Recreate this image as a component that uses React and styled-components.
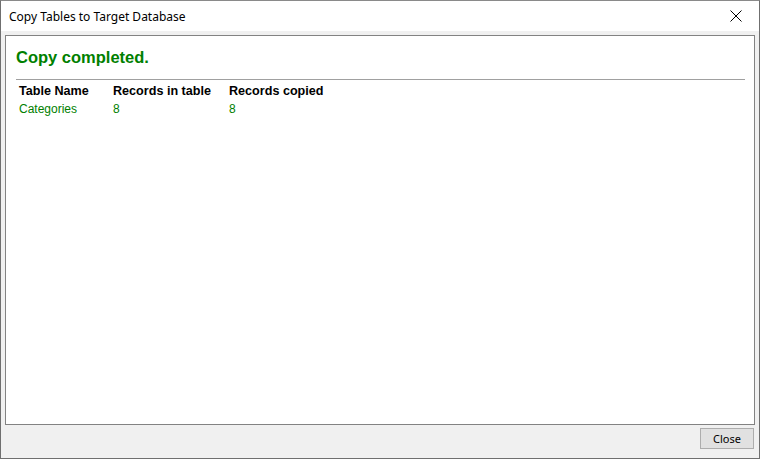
import React from 'react'
import styled, { createGlobalStyle } from 'styled-components'

const Global = createGlobalStyle`
  html, body {
    margin: 0;
    padding: 0;
    background: #ffffff;
  }
`

const Window = styled.div`
  width: 760px;
  height: 459px;
  box-sizing: border-box;
  border: 1px solid #6f6f6f;
  border-top-color: #8a8a8a;
  background: #f0f0f0;
  display: flex;
  flex-direction: column;
  font-family: "Noto Sans", "Open Sans", sans-serif;
`

const TitleBar = styled.div`
  height: 30px;
  background: #ffffff;
  display: flex;
  align-items: center;
  justify-content: space-between;
  padding-left: 8px;
  flex-shrink: 0;
`

const Title = styled.span`
  font-size: 12px;
  color: #000000;
`

const CloseX = styled.button`
  width: 46px;
  height: 30px;
  border: none;
  background: transparent;
  display: flex;
  align-items: center;
  justify-content: center;
  padding: 0;
`

const Body = styled.div`
  flex: 1;
  display: flex;
  flex-direction: column;
  padding: 4px 4px 0 4px;
`

const Panel = styled.div`
  flex: 1;
  background: #ffffff;
  border: 1px solid #828282;
  padding: 10px 9px 0 10px;
  font-family: "Liberation Sans", Arial, sans-serif;
`

const Heading = styled.h1`
  margin: 0;
  font-size: 16.5px;
  font-weight: bold;
  color: #008000;
  line-height: 22px;
`

const Rule = styled.hr`
  margin: 11px 0 0 0;
  border: none;
  border-top: 1px solid #a0a0a0;
`

const Table = styled.table`
  border-collapse: collapse;
  margin-left: 3px;
  margin-top: 1px;
`

const Th = styled.th`
  text-align: left;
  font-size: 12.6px;
  font-weight: bold;
  color: #000000;
  padding: 0;
  height: 19px;
  width: ${p => p.w}px;
`

const Td = styled.td`
  font-size: 12px;
  color: #008000;
  padding: 0;
  height: 18px;
`

const Footer = styled.div`
  height: 33px;
  display: flex;
  justify-content: flex-end;
  align-items: flex-start;
  padding: 3px 1px 0 0;
  box-sizing: border-box;
`

const Button = styled.button`
  width: 54px;
  height: 21px;
  background: #e1e1e1;
  border: 1px solid #adadad;
  font-family: "Noto Sans", "Open Sans", sans-serif;
  font-size: 11px;
  color: #000000;
  padding: 0;
`

const rows = [{ name: 'Categories', inTable: 8, copied: 8 }]

export default function App() {
  return (
    <>
      <Global />
      <Window>
        <TitleBar>
          <Title>Copy Tables to Target Database</Title>
          <CloseX aria-label="Close">
            <svg width="12" height="12" viewBox="0 0 12 12">
              <path d="M0.5 0.5 L11.5 11.5 M11.5 0.5 L0.5 11.5" stroke="#000" strokeWidth="1" />
            </svg>
          </CloseX>
        </TitleBar>
        <Body>
          <Panel>
            <Heading>Copy completed.</Heading>
            <Rule />
            <Table>
              <thead>
                <tr>
                  <Th w={94}>Table Name</Th>
                  <Th w={116}>Records in table</Th>
                  <Th w={120}>Records copied</Th>
                </tr>
              </thead>
              <tbody>
                {rows.map(r => (
                  <tr key={r.name}>
                    <Td>{r.name}</Td>
                    <Td>{r.inTable}</Td>
                    <Td>{r.copied}</Td>
                  </tr>
                ))}
              </tbody>
            </Table>
          </Panel>
          <Footer>
            <Button>Close</Button>
          </Footer>
        </Body>
      </Window>
    </>
  )
}
